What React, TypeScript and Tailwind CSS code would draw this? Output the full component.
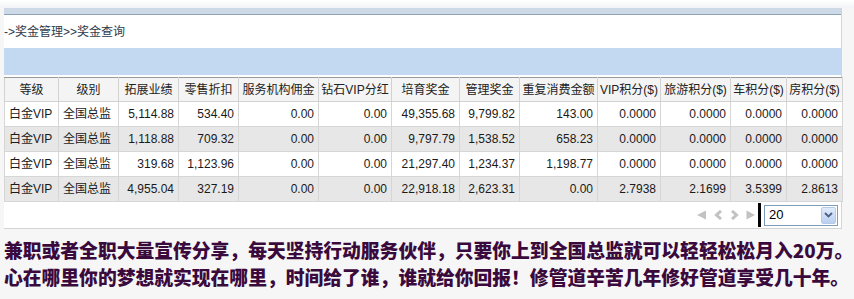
import React from "react";

const headers = [
  "等级",
  "级别",
  "拓展业绩",
  "零售折扣",
  "服务机构佣金",
  "钻石VIP分红",
  "培育奖金",
  "管理奖金",
  "重复消费金额",
  "VIP积分($)",
  "旅游积分($)",
  "车积分($)",
  "房积分($)",
];

const widths = [54, 60, 60, 60, 80, 73, 68, 60, 78, 63, 70, 56, 56];

const rows = [
  ["白金VIP", "全国总监", "5,114.88", "534.40", "0.00", "0.00", "49,355.68", "9,799.82", "143.00", "0.0000", "0.0000", "0.0000", "0.0000"],
  ["白金VIP", "全国总监", "1,118.88", "709.32", "0.00", "0.00", "9,797.79", "1,538.52", "658.23", "0.0000", "0.0000", "0.0000", "0.0000"],
  ["白金VIP", "全国总监", "319.68", "1,123.96", "0.00", "0.00", "21,297.40", "1,234.37", "1,198.77", "0.0000", "0.0000", "0.0000", "0.0000"],
  ["白金VIP", "全国总监", "4,955.04", "327.19", "0.00", "0.00", "22,918.18", "2,623.31", "0.00", "2.7938", "2.1699", "3.5399", "2.8613"],
];

function Pager() {
  return (
    <div className="flex h-[27px] items-center justify-end border-b border-[#d4d4d4] bg-white pr-[3px]">
      <div className="flex items-center gap-[7px] text-[#c2c2c2]">
        <svg width="10" height="10" viewBox="0 0 10 10">
          <path d="M0 5 L9 0.5 L9 9.5 Z" fill="currentColor" />
        </svg>
        <svg width="9" height="10" viewBox="0 0 9 10">
          <path d="M7 1 L2.5 5 L7 9" stroke="currentColor" strokeWidth="3" fill="none" />
        </svg>
        <svg width="9" height="10" viewBox="0 0 9 10">
          <path d="M2 1 L6.5 5 L2 9" stroke="currentColor" strokeWidth="3" fill="none" />
        </svg>
        <svg width="9" height="10" viewBox="0 0 9 10">
          <path d="M0.5 0.5 L9 5 L0.5 9.5 Z" fill="currentColor" />
        </svg>
      </div>
      <div className="ml-[3px] h-[24px] w-[3px] bg-black" />
      <div className="ml-[3px] flex h-[21px] w-[74px] items-center border border-[#7f9db9] bg-white">
        <span className="flex-1 pl-[4px] text-[13px] text-black">20</span>
        <div className="mr-[1px] flex h-[17px] w-[15px] items-center justify-center rounded-[2px] border border-[#b7cbe8] bg-gradient-to-b from-[#e1ebfb] to-[#b9cff1]">
          <svg width="9" height="6" viewBox="0 0 9 6">
            <path d="M1 1 L4.5 4.5 L8 1" stroke="#4d6185" strokeWidth="1.8" fill="none" />
          </svg>
        </div>
      </div>
    </div>
  );
}

export default function App() {
  return (
    <div
      className="h-[299px] w-[854px] overflow-hidden bg-[#f6f6f6]"
      style={{ fontFamily: '"Liberation Sans", Arial, "Noto Sans CJK SC", sans-serif' }}
    >
      <div className="h-[8px] bg-gradient-to-b from-white to-[#f1f3f5]" />
      <div className="ml-[4px] w-[838px] border-r border-[#d4d4d4] bg-white">
        <div className="h-[7px] border-b border-[#8ea2b6] bg-[#cdd9e6]" />
        <div className="flex h-[33px] items-center text-[12px] text-[#2d3b4c]">
          -&gt;奖金管理&gt;&gt;奖金查询
        </div>
        <div className="h-[27px] bg-[#c2d9f1]" />
        <div className="h-[2px]" />
        <table className="w-[838px] table-fixed border-collapse text-[12px] text-[#1a1a1a]">
          <colgroup>
            {widths.map((w, i) => (
              <col key={i} style={{ width: w }} />
            ))}
          </colgroup>
          <thead>
            <tr className="h-[24px] bg-[#f4f4f4]">
              {headers.map((h) => (
                <th
                  key={h}
                  className="whitespace-nowrap border border-[#d2d2d2] border-t-[#9a9a9a] px-0 text-center font-normal text-[#222]"
                >
                  {h}
                </th>
              ))}
            </tr>
          </thead>
          <tbody>
            {rows.map((r, ri) => (
              <tr key={ri} className={ri % 2 === 1 ? "h-[25px] bg-[#e7e7e7]" : "h-[25px] bg-white"}>
                {r.map((c, ci) => (
                  <td
                    key={ci}
                    className={
                      ci < 2
                        ? "whitespace-nowrap border border-[#d6d6d6] px-[4px] text-left"
                        : "whitespace-nowrap border border-[#d6d6d6] px-[4px] text-right"
                    }
                  >
                    {c}
                  </td>
                ))}
              </tr>
            ))}
          </tbody>
        </table>
        <Pager />
      </div>
      <div
        className="mt-[7px] pl-[4px] text-[18.8px] font-black leading-[27px] text-[#3b0a3d] whitespace-nowrap"
        style={{ fontFamily: '"Noto Sans CJK SC", "Noto Sans", sans-serif' }}
      >
        <div>兼职或者全职大量宣传分享，每天坚持行动服务伙伴，只要你上到全国总监就可以轻轻松松月入20万。</div>
        <div>心在哪里你的梦想就实现在哪里，时间给了谁，谁就给你回报！修管道辛苦几年修好管道享受几十年。</div>
      </div>
    </div>
  );
}
